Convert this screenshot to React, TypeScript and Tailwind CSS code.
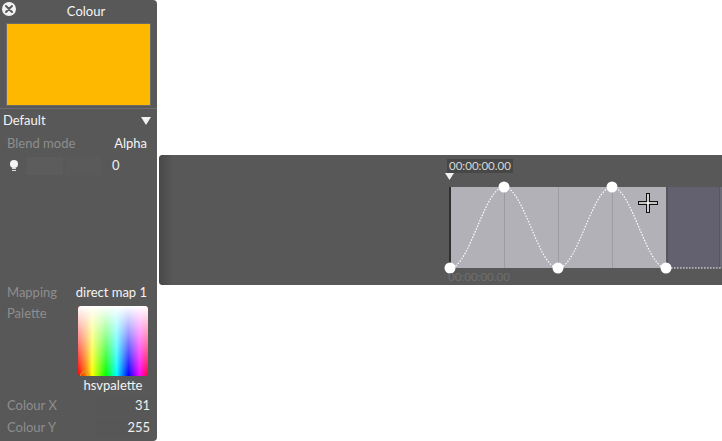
import React from 'react';

const font = { fontFamily: 'Lato, "Open Sans", sans-serif' };

const CloseIcon = () => (
  <svg width="16" height="16" viewBox="0 0 16 16">
    <circle cx="8" cy="8" r="7" fill="#f2f2f2" />
    <path d="M5 5 L11 11 M11 5 L5 11" stroke="#595959" strokeWidth="2" strokeLinecap="round" />
  </svg>
);

const BulbIcon = () => (
  <svg width="10" height="14" viewBox="0 0 10 14">
    <circle cx="5" cy="5" r="4" fill="#f4f4f4" />
    <rect x="3" y="9" width="4" height="1" fill="#ddd" />
    <rect x="3" y="11" width="4" height="1" fill="#ddd" />
  </svg>
);

const Row = ({ label, value, valueBox }: { label: string; value: string; valueBox?: boolean }) => (
  <div className="flex h-[22px] items-center justify-between pl-[7px] pr-[10px]">
    <span className="text-[13px] text-[#8e8e8e]">{label}</span>
    {valueBox ? (
      <span className="mr-[-4px] flex h-[20px] w-[56px] items-center justify-end bg-[#575757] pr-[1px] text-[13px] text-[#f0f0f0]">
        {value}
      </span>
    ) : (
      <span className="text-[13px] text-[#f4f4f4]">{value}</span>
    )}
  </div>
);

// curve in canvas coords (svg starts 8px left of the clip)
const wave = (() => {
  const pts: string[] = [];
  for (let x = 0; x <= 216; x += 2) {
    const y = 121 - 81 * (1 - Math.cos((Math.PI * x) / 54)) / 2;
    pts.push(`${x + 11},${y.toFixed(1)}`);
  }
  return 'M' + pts.join(' L') + ' L290,121';
})();

const points = [0, 54, 108, 162, 216].map((x, i) => [x + 11, i % 2 ? 40 : 121]);

const Timeline = () => (
  <div className="relative ml-[2px] mt-[155px] h-[130px] flex-1 overflow-hidden rounded-l-[4px] bg-[#585858]">
    <div className="absolute left-0 top-0 h-full w-[14px] bg-gradient-to-r from-[#484848] to-[#585858]" />
    <div className="absolute left-[288px] top-[4px] flex h-[14px] items-center bg-[#474747] px-[2px] text-[11.5px] leading-none text-[#d8d8d8]">
      00:00:00.00
    </div>
    <svg className="absolute left-[286px] top-[18px]" width="10" height="8" viewBox="0 0 10 8">
      <path d="M0 0 L9 0 L4.5 7 Z" fill="#f2f2f2" />
    </svg>
    <div className="absolute left-[290px] top-[32px] flex h-[81px] w-[217px] border-l-2 border-[#2f2f2f] bg-[#b1b1b7]">
      <div className="h-full flex-1 border-r border-[#9c9ca3]" />
      <div className="h-full flex-1 border-r border-[#9c9ca3]" />
      <div className="h-full flex-1 border-r border-[#9c9ca3]" />
      <div className="h-full flex-1" />
    </div>
    <div className="absolute left-[508px] top-[32px] h-[81px] w-[52px] border-l border-[#54525e] bg-[#63616f]" />
    <div className="absolute left-[561px] top-[32px] h-[81px] w-[3px] bg-[#6c6b78]" />
    <svg className="absolute left-[280px] top-[-8px]" width="290" height="140" viewBox="0 0 290 140">
      <path d={wave} fill="none" stroke="#ffffff" strokeWidth="1.2" strokeDasharray="1.5 1.5" />
      {points.map(([x, y], i) => (
        <circle key={i} cx={x} cy={y} r="5.5" fill="#ffffff" />
      ))}
      <path d="M209 46 L209 66 M199 56 L219 56" stroke="#111" strokeWidth="4" />
      <path d="M209 47 L209 65 M200 56 L218 56" stroke="#fff" strokeWidth="1.6" />
    </svg>
    <div className="absolute left-[289px] top-[116px] text-[11.5px] leading-none text-[#6e6e6e]">00:00:00.00</div>
  </div>
);

export default function App() {
  return (
    <div className="flex h-[441px] w-[722px] overflow-hidden bg-white" style={font}>
      <div className="flex h-[441px] w-[157px] shrink-0 flex-col rounded-r-[4px] bg-[#585858]">
        <div className="flex h-[23px] items-start">
          <div className="pl-[1px] pt-[1px]">
            <CloseIcon />
          </div>
          <div className="flex-1 pr-[2px] pt-[5px] text-center text-[13px] leading-none text-[#f4f4f4]">Colour</div>
        </div>
        <div className="mx-[6px] h-[83px] border border-[#6a6a6a] bg-[#ffb800]" />
        <div className="mt-[2px] h-px bg-[#6c6c6c]" />
        <div className="mt-[1px] flex h-[22px] items-center justify-between pl-[3px] pr-[6px]">
          <span className="text-[13px] text-[#f4f4f4]">Default</span>
          <svg width="10" height="9" viewBox="0 0 10 9">
            <path d="M0 0 L10 0 L5 8 Z" fill="#f2f2f2" />
          </svg>
        </div>
        <div className="mt-[1px]">
          <Row label="Blend mode" value="Alpha" />
        </div>
        <div className="flex h-[22px] items-center pl-[9px] pr-[6px]">
          <BulbIcon />
          <div className="ml-[8px] h-[18px] w-[36px] bg-[#5c5c5c]" />
          <div className="ml-[2px] h-[18px] w-[36px] bg-[#5a5a5a]" />
          <span className="ml-[11px] text-[13px] text-[#f0f0f0]">0</span>
        </div>
        <div className="flex-1" />
        <Row label="Mapping" value="direct map 1" />
        <div className="flex pl-[7px] pr-[9px]">
          <span className="mt-[1px] text-[13px] leading-[16px] text-[#8e8e8e]">Palette</span>
          <div className="ml-auto flex flex-col items-center">
            <div className="relative mt-[2px] h-[70px] w-[70px] overflow-hidden rounded-[3px] bg-[linear-gradient(to_right,#ff0000,#ff8800_12%,#ffff00_20%,#00ff00_40%,#00ffff_55%,#0000ff_72%,#ff00ff_88%,#ff0033)]">
              <div className="absolute inset-0 bg-gradient-to-b from-white to-transparent" />
              <div className="absolute bottom-[-5px] left-[2px] h-[10px] w-[10px] rounded-full border border-[#c9a23a]" />
            </div>
            <span className="mt-[2px] text-[13px] leading-[14px] text-[#f4f4f4]">hsvpalette</span>
          </div>
        </div>
        <div className="mt-[3px]">
          <Row label="Colour X" value="31" valueBox />
          <Row label="Colour Y" value="255" valueBox />
        </div>
        <div className="h-[2px]" />
      </div>
      <Timeline />
    </div>
  );
}
